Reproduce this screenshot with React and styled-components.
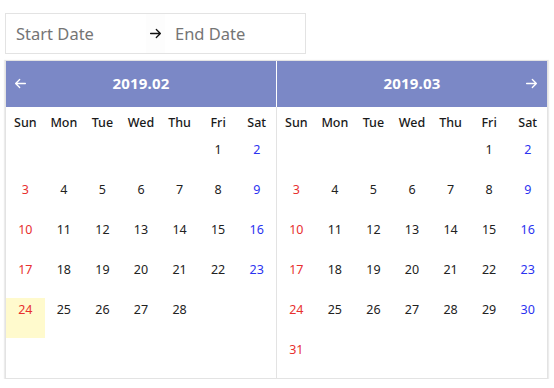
import React from "react";
import styled, { createGlobalStyle } from "styled-components";

const colors = {
  purple: "#7b88c6",
  border: "#e3e3e3",
  sun: "#e8312f",
  sat: "#2b33f0",
  today: "#fffacd",
};

const GlobalStyle = createGlobalStyle`
  body {
    margin: 0;
    background: #fff;
    font-family: "Noto Sans", "Open Sans", sans-serif;
  }
`;

const weekDays = ["Sun", "Mon", "Tue", "Wed", "Thu", "Fri", "Sat"];

const buildWeeks = (offset, days) => {
  const cells = [];
  for (let i = 0; i < offset; i++) cells.push(null);
  for (let d = 1; d <= days; d++) cells.push(d);
  while (cells.length % 7 !== 0) cells.push(null);
  const weeks = [];
  for (let i = 0; i < cells.length; i += 7) weeks.push(cells.slice(i, i + 7));
  return weeks;
};

const months = [
  { title: "2019.02", offset: 5, days: 28, prev: true, highlight: 24 },
  { title: "2019.03", offset: 5, days: 31, next: true },
];

const ArrowIcon = ({ dir = "right", size = 13, color = "currentColor" }) => (
  <svg
    width={size}
    height={size}
    viewBox="0 0 16 16"
    fill="none"
    stroke={color}
    strokeWidth="1.6"
    strokeLinecap="round"
    strokeLinejoin="round"
    style={{ transform: dir === "left" ? "scaleX(-1)" : "none" }}
  >
    <path d="M2 8h12M9 3l5 5-5 5" />
  </svg>
);

const Month = ({ month }) => {
  const weeks = buildWeeks(month.offset, month.days);
  return (
    <Panel>
      <Header>
        <NavSlot>{month.prev && <ArrowIcon dir="left" color="#fff" />}</NavSlot>
        <Title>{month.title}</Title>
        <NavSlot>{month.next && <ArrowIcon color="#fff" />}</NavSlot>
      </Header>
      <WeekRow>
        {weekDays.map((w) => (
          <WeekDay key={w}>{w}</WeekDay>
        ))}
      </WeekRow>
      <Days>
        {weeks.flat().map((d, i) => (
          <Day
            key={i}
            $col={i % 7}
            $active={d !== null && d === month.highlight}
          >
            {d}
          </Day>
        ))}
      </Days>
    </Panel>
  );
};

const App = () => (
  <>
    <GlobalStyle />
    <Page>
      <RangeInput>
        <Field>Start Date</Field>
        <Separator>
          <ArrowIcon size={13} color="#111" />
        </Separator>
        <Field>End Date</Field>
      </RangeInput>
      <Calendar>
        {months.map((m) => (
          <Month key={m.title} month={m} />
        ))}
      </Calendar>
    </Page>
  </>
);

const Page = styled.div`
  padding: 13px 0 0 5px;
`;

const RangeInput = styled.div`
  width: 299px;
  height: 39px;
  border: 1px solid ${colors.border};
  display: flex;
  align-items: center;
  box-sizing: content-box;
`;

const Field = styled.span`
  width: 140px;
  padding-left: 10px;
  font-size: 16.5px;
  color: #757575;
  box-sizing: border-box;
  &:last-child {
    padding-left: 10px;
  }
`;

const Separator = styled.span`
  width: 19px;
  height: 39px;
  display: flex;
  align-items: center;
  justify-content: center;
  background: #fdfdfd;
  margin-left: 0;
`;

const Calendar = styled.div`
  margin-top: 6px;
  width: 541px;
  display: flex;
  border: 1px solid ${colors.border};
  box-shadow: 0 1px 1px 1px #ececec;
`;

const Panel = styled.div`
  width: 270px;
  & + & {
    border-left: 1px solid ${colors.border};
  }
  & + & > div:first-child {
    box-shadow: -1px 0 0 #fff;
  }
`;

const Header = styled.div`
  height: 46px;
  background: ${colors.purple};
  display: flex;
  align-items: center;
  justify-content: space-between;
  padding: 0 8px 2px;
  box-sizing: border-box;
`;

const NavSlot = styled.span`
  width: 14px;
  display: flex;
  align-items: center;
`;

const Title = styled.span`
  color: #fff;
  font-weight: 700;
  font-size: 15px;
  letter-spacing: 0.2px;
`;

const WeekRow = styled.div`
  display: grid;
  grid-template-columns: repeat(7, 1fr);
  height: 31px;
  align-items: center;
`;

const WeekDay = styled.span`
  text-align: center;
  font-size: 12.5px;
  font-weight: 500;
  color: #1a1a1a;
`;

const Days = styled.div`
  display: grid;
  grid-template-columns: repeat(7, 1fr);
  grid-auto-rows: 40px;
`;

const dayColor = (col) => (col === 0 ? colors.sun : col === 6 ? colors.sat : "#222");

const Day = styled.span`
  text-align: center;
  padding-top: 3px;
  font-size: 12.5px;
  line-height: 18px;
  color: ${({ $col }) => dayColor($col)};
  background: ${({ $active }) => ($active ? colors.today : "transparent")};
`;

export default App;
